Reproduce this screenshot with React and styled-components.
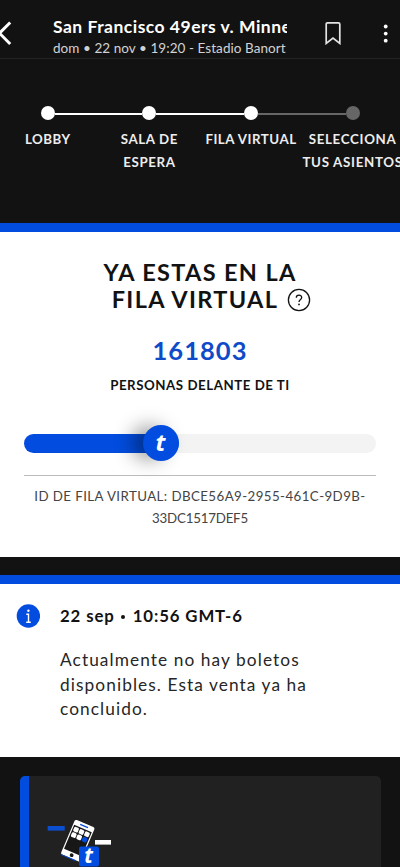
import React from 'react';
import styled, { createGlobalStyle } from 'styled-components';

const BLUE = '#024ddf';
const INK = '#121212';

const GlobalStyle = createGlobalStyle`
  * { box-sizing: border-box; }
  body {
    margin: 0;
    background: ${INK};
    font-family: Lato, 'Open Sans', sans-serif;
    overflow: hidden;
  }
`;

const Screen = styled.div`
  width: 400px;
  height: 867px;
  overflow: hidden;
  background: ${INK};
  display: flex;
  flex-direction: column;
  > * { flex-shrink: 0; }
`;

const Header = styled.header`
  height: 59px;
  border-bottom: 1px solid #232323;
  display: flex;
  color: #fff;
`;

const BackIcon = styled.svg`
  width: 13px;
  height: 26px;
  margin-top: 20px;
`;

const EventInfo = styled.div`
  width: 234px;
  margin-left: 40px;
  padding-top: 15px;
  overflow: hidden;
  white-space: nowrap;
`;

const EventTitle = styled.div`
  font-size: 17.5px;
  font-weight: 700;
  line-height: 23px;
  letter-spacing: 0.49px;
`;

const EventMeta = styled.div`
  font-size: 13.5px;
  line-height: 20px;
  letter-spacing: 0.06px;
  color: #d2d2d2;
`;

const BookmarkIcon = styled.svg`
  width: 16px;
  height: 24px;
  margin: 21px 0 0 37.5px;
`;

const MoreIcon = styled.svg`
  width: 6px;
  height: 20px;
  margin: 24px 0 0 42.5px;
`;

const Stepper = styled.ol`
  list-style: none;
  margin: 0 0 0 -3px;
  padding: 47px 0 0;
  height: 164px;
  width: 407px;
  display: grid;
  grid-template-columns: repeat(4, 101.6px);
`;

const Step = styled.li`
  display: flex;
  flex-direction: column;
  align-items: center;
`;

const Track = styled.div`
  width: 100%;
  height: 14px;
  display: grid;
  grid-template-columns: 1fr 14px 1fr;
  align-items: center;
`;

const Segment = styled.div`
  height: 2.5px;
  margin-top: 2px;
  background: ${(p) => p.$color};
`;

const Dot = styled.div`
  height: 14px;
  border-radius: 50%;
  background: ${(p) => (p.$done ? '#fff' : '#666')};
`;

const StepLabel = styled.div`
  margin-top: 8px;
  font-size: 13.3px;
  font-weight: 700;
  line-height: 22.5px;
  letter-spacing: ${(p) => p.$spacing}px;
  text-align: center;
  white-space: pre;
  color: #ededed;
`;

const Panel = styled.section`
  border-top: 9px solid ${BLUE};
  background: #fff;
  color: ${INK};
`;

const QueuePanel = styled(Panel)`
  height: 334px;
  padding: 27px 24px 0;
  text-align: center;
`;

const Heading = styled.h1`
  margin: 0;
  font-size: 23.5px;
  font-weight: 700;
  line-height: 27px;
  letter-spacing: 1.35px;
`;

const HeadingRow = styled.span`
  display: flex;
  justify-content: center;
  align-items: center;
  gap: 9px;
  padding-left: 23px;
`;

const HelpIcon = styled.svg`
  width: 24px;
  height: 24px;
`;

const QueueCount = styled.div`
  margin-top: 22px;
  font-size: 25.5px;
  font-weight: 700;
  line-height: 30px;
  letter-spacing: 1.05px;
  color: #0f4bc9;
`;

const QueueCaption = styled.div`
  margin-top: 10px;
  font-size: 13.3px;
  font-weight: 700;
  line-height: 20px;
  letter-spacing: 0.53px;
`;

const Progress = styled.div`
  margin-top: 39px;
  height: 18.5px;
  border-radius: 10px;
  background: #f3f3f3;
  display: flex;
`;

const ProgressFill = styled.div`
  width: 155px;
  height: 100%;
  border-radius: 10px;
  background: ${BLUE};
  display: flex;
  justify-content: flex-end;
  align-items: center;
`;

const Thumb = styled.div`
  flex: none;
  width: 36px;
  height: 36px;
  border-radius: 50%;
  background: ${BLUE};
  box-shadow: -12px 0 20px -2px rgba(0, 0, 0, 0.45);
  color: #fff;
  font: italic 700 24px/33px 'Noto Sans', sans-serif;
  padding-right: 1px;
`;

const QueueId = styled.div`
  margin-top: 22px;
  padding-top: 9px;
  border-top: 1px solid #bdbdbd;
  font-size: 13.3px;
  line-height: 22.5px;
  color: #444;
  white-space: nowrap;
`;

const IdLine = styled.div`
  letter-spacing: ${(p) => p.$spacing}px;
`;

const NoticePanel = styled(Panel)`
  margin-top: 18px;
  height: 182px;
  padding: 20px 17px 0 16px;
  display: flex;
  gap: 20px;
`;

const InfoIcon = styled.svg`
  flex: none;
  width: 24px;
  height: 24px;
`;

const NoticeTime = styled.div`
  display: flex;
  align-items: center;
  font-size: 16.8px;
  font-weight: 700;
  line-height: 24px;
  letter-spacing: 0.88px;
`;

const TimeDivider = styled.i`
  width: 4px;
  height: 4px;
  margin: 2px 7.5px 0 6.5px;
  border-radius: 50%;
  background: ${INK};
`;

const NoticeText = styled.p`
  margin: 20px 0 0;
  font-size: 17.3px;
  line-height: 24.7px;
  letter-spacing: 1.08px;
  white-space: pre;
  color: #262626;
`;

const AppCard = styled.section`
  margin: 18.5px 19.5px 0 20px;
  height: 120px;
  border-left: 9.5px solid ${BLUE};
  border-radius: 5px;
  background: #212121;
  padding: 39.5px 0 0 18px;
`;

const PhoneArt = styled.svg`
  display: block;
  width: 66px;
  height: 54px;
`;

const steps = [
  { label: 'LOBBY', spacing: 0.5, done: true, left: 'transparent', right: '#fff' },
  { label: 'SALA DE\nESPERA', spacing: 0.6, done: true, left: '#fff', right: '#fff' },
  { label: 'FILA VIRTUAL', spacing: 0.5, done: true, left: '#fff', right: '#666' },
  { label: 'SELECCIONA\nTUS ASIENTOS', spacing: 0.7, done: false, left: '#666', right: 'transparent' },
];

const appDots = [[4.8, 6.6], [10.7, 6.6], [16.6, 6.6], [4.8, 12.5], [10.7, 12.5], [16.6, 12.5]];

export default function App() {
  return (
    <>
      <GlobalStyle />
      <Screen>
        <Header>
          <BackIcon viewBox="0 0 13 26" fill="none" stroke="#fff" strokeWidth="3">
            <path d="M10.2 2.5 L-0.5 13.2 L10.2 24" />
          </BackIcon>
          <EventInfo>
            <EventTitle>San Francisco 49ers v. Minne</EventTitle>
            <EventMeta>dom • 22 nov • 19:20 - Estadio Banort</EventMeta>
          </EventInfo>
          <BookmarkIcon viewBox="0 0 16 24" fill="none" stroke="#e4e4e4" strokeWidth="1.7">
            <path d="M1.2 3.2 Q1.2 1.9 2.5 1.9 H13.5 Q14.8 1.9 14.8 3.2 V22.4 L8 17 L1.2 22.4 Z" />
          </BookmarkIcon>
          <MoreIcon viewBox="0 0 6 20" fill="#fff">
            <circle cx="2.7" cy="2.5" r="1.9" />
            <circle cx="2.7" cy="9.6" r="1.9" />
            <circle cx="2.7" cy="16.7" r="1.9" />
          </MoreIcon>
        </Header>

        <Stepper>
          {steps.map((s) => (
            <Step key={s.label}>
              <Track>
                <Segment $color={s.left} />
                <Dot $done={s.done} />
                <Segment $color={s.right} />
              </Track>
              <StepLabel $spacing={s.spacing}>{s.label}</StepLabel>
            </Step>
          ))}
        </Stepper>

        <QueuePanel>
          <Heading>
            YA ESTAS EN LA
            <HeadingRow>
              FILA VIRTUAL
              <HelpIcon viewBox="0 0 24 24" fill="none" stroke="#121212">
                <circle cx="12" cy="12" r="10.6" strokeWidth="1.3" />
                <path d="M9.3 9.7 C9.3 6.3 14.7 6.3 14.7 9.5 C14.7 11.5 12 11.4 12 14" strokeWidth="1.3" />
                <circle cx="12" cy="16.4" r="0.9" fill="#121212" stroke="none" />
              </HelpIcon>
            </HeadingRow>
          </Heading>
          <QueueCount>161803</QueueCount>
          <QueueCaption>PERSONAS DELANTE DE TI</QueueCaption>
          <Progress>
            <ProgressFill>
              <Thumb>t</Thumb>
            </ProgressFill>
          </Progress>
          <QueueId>
            <IdLine $spacing={0.42}>ID DE FILA VIRTUAL: DBCE56A9-2955-461C-9D9B-</IdLine>
            <IdLine $spacing={-0.2}>33DC1517DEF5</IdLine>
          </QueueId>
        </QueuePanel>

        <NoticePanel>
          <InfoIcon viewBox="0 0 24 24">
            <circle cx="12.4" cy="12" r="11.7" fill={BLUE} />
            <circle cx="12.4" cy="6.7" r="1.2" fill="#fff" />
            <path d="M10.3 10.3 H12.5 V18.2 M10.2 18.2 H14.8" fill="none" stroke="#fff" strokeWidth="1.4" />
          </InfoIcon>
          <div>
            <NoticeTime>
              22 sep
              <TimeDivider />
              10:56 GMT-6
            </NoticeTime>
            <NoticeText>{'Actualmente no hay boletos\ndisponibles. Esta venta ya ha\nconcluido.'}</NoticeText>
          </div>
        </NoticePanel>

        <AppCard>
          <PhoneArt viewBox="0 0 66 54">
            <rect x="0.7" y="11" width="17" height="4.6" fill="#0b4fd0" />
            <rect x="48" y="25" width="16" height="4.6" fill="#fff" />
            <g transform="translate(28.2 4.4) rotate(23)">
              <rect x="0" y="0" width="21.5" height="37.5" rx="1.8" fill="#fff" />
              <rect x="1.2" y="5.4" width="19.1" height="26" fill="#171717" />
              <path d="M6.5 2.6 H15" stroke={BLUE} strokeWidth="1.2" />
              {appDots.map(([x, y], i) => (
                <rect
                  key={i}
                  x={x - 2.5}
                  y={y}
                  width="5"
                  height="5"
                  rx="1.3"
                  fill={i === 5 ? BLUE : '#fff'}
                />
              ))}
              <circle cx="10.7" cy="34.3" r="1.9" fill="#171717" />
              <path d="M0.5 37.8 H16" stroke={BLUE} strokeWidth="1" />
            </g>
            <rect x="32" y="31.5" width="20" height="20" rx="2" fill={BLUE} />
            <text
              x="41.5"
              y="48.3"
              textAnchor="middle"
              fill="#fff"
              fontFamily="Noto Sans, sans-serif"
              fontStyle="italic"
              fontWeight="700"
              fontSize="21"
            >
              t
            </text>
          </PhoneArt>
        </AppCard>
      </Screen>
    </>
  );
}
